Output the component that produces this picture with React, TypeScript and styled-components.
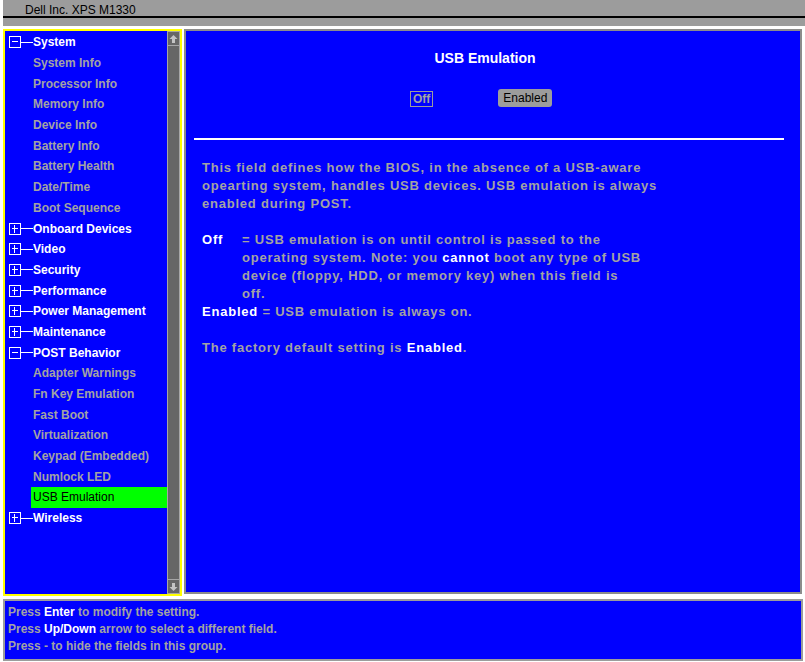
import styled, { createGlobalStyle } from "styled-components";

const GlobalStyle = createGlobalStyle`
  html, body {
    margin: 0;
    padding: 0;
    background: #ffffff;
  }
  body {
    font-family: "Liberation Sans", Arial, sans-serif;
  }
`;

type TreeRow =
  | { kind: "group"; label: string; open: boolean }
  | { kind: "item"; label: string; selected?: boolean };

const tree: TreeRow[] = [
  { kind: "group", label: "System", open: true },
  { kind: "item", label: "System Info" },
  { kind: "item", label: "Processor Info" },
  { kind: "item", label: "Memory Info" },
  { kind: "item", label: "Device Info" },
  { kind: "item", label: "Battery Info" },
  { kind: "item", label: "Battery Health" },
  { kind: "item", label: "Date/Time" },
  { kind: "item", label: "Boot Sequence" },
  { kind: "group", label: "Onboard Devices", open: false },
  { kind: "group", label: "Video", open: false },
  { kind: "group", label: "Security", open: false },
  { kind: "group", label: "Performance", open: false },
  { kind: "group", label: "Power Management", open: false },
  { kind: "group", label: "Maintenance", open: false },
  { kind: "group", label: "POST Behavior", open: true },
  { kind: "item", label: "Adapter Warnings" },
  { kind: "item", label: "Fn Key Emulation" },
  { kind: "item", label: "Fast Boot" },
  { kind: "item", label: "Virtualization" },
  { kind: "item", label: "Keypad (Embedded)" },
  { kind: "item", label: "Numlock LED" },
  { kind: "item", label: "USB Emulation", selected: true },
  { kind: "group", label: "Wireless", open: false },
];

function App() {
  return (
    <>
      <GlobalStyle />
      <Screen>
        <TitleBar>
          <TitleText>Dell Inc. XPS M1330</TitleText>
          <TitleRule />
        </TitleBar>

        <Main>
          <LeftPanel>
            <Tree>
              {tree.map((row) =>
                row.kind === "group" ? (
                  <GroupRow key={row.label}>
                    <Expander $open={row.open} />
                    <Connector />
                    <GroupLabel>{row.label}</GroupLabel>
                  </GroupRow>
                ) : (
                  <ItemRow key={row.label}>
                    <ItemLabel $selected={row.selected}>{row.label}</ItemLabel>
                  </ItemRow>
                )
              )}
            </Tree>
            <Scrollbar>
              <ScrollButton>
                <svg width="9" height="10" viewBox="0 0 9 10">
                  <path d="M4.5 1 L8.5 5 L6 5 L6 9 L3 9 L3 5 L0.5 5 Z" fill="#c4c4c4" />
                </svg>
              </ScrollButton>
              <ScrollTrack />
              <ScrollButton>
                <svg width="9" height="10" viewBox="0 0 9 10">
                  <path d="M4.5 9 L8.5 5 L6 5 L6 1 L3 1 L3 5 L0.5 5 Z" fill="#c4c4c4" />
                </svg>
              </ScrollButton>
            </Scrollbar>
          </LeftPanel>

          <RightPanel>
            <SettingTitle>USB Emulation</SettingTitle>
            <OptionRow>
              <OptionBox>Off</OptionBox>
              <OptionButton>Enabled</OptionButton>
            </OptionRow>
            <Rule />
            <Help>
              <p>
                This field defines how the BIOS, in the absence of a USB-aware
                <br />
                opearting system, handles USB devices. USB emulation is always
                <br />
                enabled during POST.
              </p>
              <Definition>
                <Term>Off</Term>
                <span>
                  = USB emulation is on until control is passed to the
                  <br />
                  operating system. Note: you <Strong>cannot</Strong> boot any type of USB
                  <br />
                  device (floppy, HDD, or memory key) when this field is
                  <br />
                  off.
                </span>
              </Definition>
              <p>
                <Strong>Enabled</Strong> = USB emulation is always on.
              </p>
              <p>
                The factory default setting is <Strong>Enabled</Strong>.
              </p>
            </Help>
          </RightPanel>
        </Main>

        <HintPanel>
          <div>
            Press <Strong>Enter</Strong> to modify the setting.
          </div>
          <div>
            Press <Strong>Up/Down</Strong> arrow to select a different field.
          </div>
          <div>Press - to hide the fields in this group.</div>
        </HintPanel>
      </Screen>
    </>
  );
}

export default App;

const BLUE = "#0000ff";
const DIM = "#a3a3a3";

const Screen = styled.div`
  width: 805px;
  height: 662px;
  box-sizing: border-box;
  padding-left: 3px;
  display: flex;
  flex-direction: column;
  overflow: hidden;
`;

const TitleBar = styled.div`
  height: 26px;
  background: #9c9c9c;
  margin-bottom: 3px;
`;

const TitleText = styled.div`
  height: 14px;
  padding-top: 2px;
  line-height: 16px;
  padding-left: 22px;
  font-size: 12px;
  color: #000;
`;

const TitleRule = styled.div`
  height: 2px;
  background: #000;
`;

const Main = styled.div`
  display: flex;
  align-items: flex-start;
  gap: 2px;
  height: 567px;
`;

const LeftPanel = styled.div`
  width: 179px;
  height: 567px;
  box-sizing: border-box;
  border: 2px solid #ffff00;
  background: ${BLUE};
  display: flex;
`;

const Tree = styled.div`
  flex: 1;
  padding-top: 1px;
  font-size: 12px;
  font-weight: 700;
`;

const GroupRow = styled.div`
  height: 20.7px;
  display: flex;
  align-items: center;
  padding-left: 4px;
`;

const Expander = styled.span<{ $open: boolean }>`
  position: relative;
  width: 12px;
  height: 12px;
  box-sizing: border-box;
  border: 1px solid #ffffff;

  &::before {
    content: "";
    position: absolute;
    left: 2px;
    right: 2px;
    top: 4px;
    height: 1px;
    background: #ffffff;
  }

  &::after {
    content: "";
    display: ${(p) => (p.$open ? "none" : "block")};
    position: absolute;
    top: 1px;
    bottom: 1px;
    left: 4px;
    width: 1px;
    background: #ffffff;
  }
`;

const Connector = styled.span`
  width: 12px;
  height: 1px;
  background: #ffffff;
`;

const GroupLabel = styled.span`
  color: #ffffff;
`;

const ItemRow = styled.div`
  height: 20.7px;
  padding-left: 26px;
  display: flex;
`;

const ItemLabel = styled.span<{ $selected?: boolean }>`
  flex: 1;
  display: flex;
  align-items: center;
  padding-left: 2px;
  color: ${(p) => (p.$selected ? "#000000" : DIM)};
  font-weight: ${(p) => (p.$selected ? 400 : 700)};
  background: ${(p) => (p.$selected ? "#00ff00" : "transparent")};
`;

const Scrollbar = styled.div`
  width: 13px;
  box-sizing: border-box;
  border-left: 1px solid #a6a6a6;
  border-right: 1px solid #a6a6a6;
  background: #666666;
  display: flex;
  flex-direction: column;
`;

const ScrollButton = styled.div`
  height: 15px;
  border-top: 1px solid #a6a6a6;
  border-bottom: 1px solid #a6a6a6;
  display: flex;
  align-items: center;
  justify-content: center;
  box-sizing: border-box;
`;

const ScrollTrack = styled.div`
  flex: 1;
`;

const RightPanel = styled.div`
  flex: 1;
  height: 565px;
  margin-right: 3px;
  box-sizing: border-box;
  border: 2px solid #8c8c8c;
  background: ${BLUE};
  padding-top: 19px;
`;

const SettingTitle = styled.div`
  padding-right: 16px;
  text-align: center;
  font-size: 14px;
  font-weight: 700;
  line-height: 16px;
  color: #ffffff;
`;

const OptionRow = styled.div`
  margin-top: 23px;
  height: 18px;
  display: flex;
  align-items: flex-end;
  padding-left: 224px;
  gap: 65px;
  font-size: 12px;
`;

const OptionBox = styled.span`
  height: 16px;
  box-sizing: border-box;
  padding: 0 2px;
  line-height: 15px;
  border: 1px solid #9c9c9c;
  font-weight: 700;
  color: ${DIM};
`;

const OptionButton = styled.span`
  height: 18px;
  width: 54px;
  box-sizing: border-box;
  line-height: 19px;
  text-align: center;
  border-radius: 3px;
  background: #9c9c9c;
  color: #000;
`;

const Rule = styled.div`
  height: 2px;
  margin: 31px 16px 0 8px;
  background: #ffffff;
`;

const Help = styled.div`
  padding: 19px 0 0 16px;
  font-size: 13px;
  font-weight: 700;
  line-height: 18px;
  letter-spacing: 0.78px;
  color: ${DIM};

  p {
    margin: 0 0 18px;
  }
`;

const Definition = styled.div`
  display: grid;
  grid-template-columns: 40px auto;
`;

const Term = styled.span`
  color: #ffffff;
`;

const Strong = styled.span`
  color: #ffffff;
  font-weight: 700;
`;

const HintPanel = styled.div`
  margin-top: 3px;
  margin-right: 2px;
  height: 62px;
  box-sizing: border-box;
  border: 2px solid #9c9c9c;
  background: ${BLUE};
  padding: 3px 3px 0;
  font-size: 12px;
  font-weight: 700;
  line-height: 17px;
  color: ${DIM};
`;
